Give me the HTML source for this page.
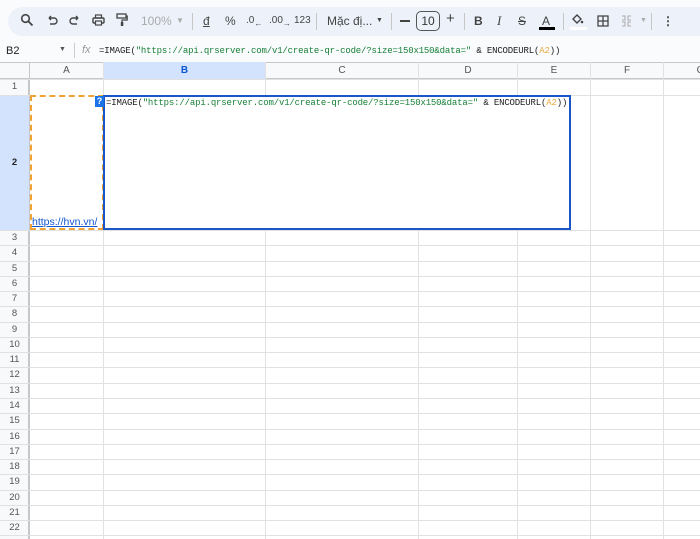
<!DOCTYPE html>
<html><head><meta charset="utf-8"><style>
*{box-sizing:border-box;margin:0;padding:0}
body{width:700px;height:539px;overflow:hidden;background:#f9fbfd;font-family:"Liberation Sans",sans-serif;position:relative;color:#444}
.a{position:absolute}
.tb{left:8px;top:7px;width:720px;height:29px;background:#edf2fa;border-radius:15px}
.ic{position:absolute;top:14px;font-size:12px;color:#444;line-height:14px}
.sep{position:absolute;top:13px;width:1px;height:17px;background:#c7c7c7}
.grid{left:0;top:62px;width:700px;height:477px;background:#fff}
.vl{position:absolute;width:1px;background:#e1e1e1}
.hl{position:absolute;height:1px;background:#e1e1e1;left:0;width:700px}
.ch{position:absolute;top:62px;height:17px;font-size:10px;color:#555;text-align:center;line-height:17px;background:#f8f9fa}
.rh{position:absolute;left:0;width:29px;font-size:9.5px;color:#555;text-align:center;background:#f8f9fa}
.mono{font-family:"Liberation Mono",monospace;font-size:9px;letter-spacing:-0.16px;color:#222}
</style></head><body>
<div class="a tb"></div>
<svg class="a" style="left:20px;top:13px" width="14" height="14" viewBox="0 0 14 14"><circle cx="5.5" cy="5.5" r="3.8" fill="none" stroke="#444" stroke-width="1.6"/><path d="M8.3 8.3L12.5 12.5" stroke="#444" stroke-width="1.8"/></svg>
<svg class="a" style="left:46px;top:14px" width="12" height="12" viewBox="0 0 12 12"><path d="M3 4h5a3 3 0 0 1 0 6H4M3 4l2-2M3 4l2 2" fill="none" stroke="#444" stroke-width="1.4"/></svg>
<svg class="a" style="left:69px;top:14px" width="12" height="12" viewBox="0 0 12 12"><path d="M9 4H4a3 3 0 0 0 0 6h4M9 4L7 2M9 4L7 6" fill="none" stroke="#444" stroke-width="1.4"/></svg>
<svg class="a" style="left:92px;top:14px" width="13" height="12" viewBox="0 0 13 12"><rect x="1" y="4" width="11" height="5" rx="1" fill="none" stroke="#444" stroke-width="1.4"/><rect x="3.5" y="1" width="6" height="3" fill="none" stroke="#444" stroke-width="1.2"/><rect x="3.5" y="7" width="6" height="4" fill="#edf2fa" stroke="#444" stroke-width="1.2"/></svg>
<svg class="a" style="left:116px;top:13px" width="12" height="14" viewBox="0 0 12 14"><rect x="1" y="1" width="9" height="4" fill="none" stroke="#444" stroke-width="1.3"/><path d="M10 3h1.2v4H6v2" fill="none" stroke="#444" stroke-width="1.2"/><rect x="4.8" y="9" width="2.5" height="4" fill="#444"/></svg>
<div class="ic" style="left:141px;color:#aaa">100%</div>
<div class="ic" style="left:176px;color:#aaa;font-size:8px">▼</div>
<div class="sep" style="left:192px"></div>
<div class="ic" style="left:203px;text-decoration:underline">đ</div>
<div class="ic" style="left:225px">%</div>
<div class="ic" style="left:246px;font-size:10px">.0<sub style="font-size:8px">←</sub></div>
<div class="ic" style="left:269px;font-size:10px">.00<sub style="font-size:8px">→</sub></div>
<div class="ic" style="left:294px;font-size:10px">123</div>
<div class="sep" style="left:316px"></div>
<div class="ic" style="left:327px">Mặc đị...</div>
<div class="ic" style="left:376px;font-size:7px">▼</div>
<div class="sep" style="left:391px"></div>
<div class="a" style="left:400px;top:20px;width:10px;height:1.5px;background:#444"></div>
<div class="a" style="left:416px;top:11px;width:24px;height:20px;border:1px solid #555;border-radius:5px;font-size:12px;text-align:center;line-height:18px;color:#333">10</div>
<div class="ic" style="left:446px;font-size:15px;top:12px">+</div>
<div class="sep" style="left:464px"></div>
<div class="ic" style="left:474px;font-weight:bold">B</div>
<div class="ic" style="left:497px;font-style:italic;font-family:'Liberation Serif',serif;font-size:13px">I</div>
<div class="ic" style="left:518px;text-decoration:line-through">S</div>
<div class="ic" style="left:542px">A</div>
<div class="a" style="left:539px;top:27px;width:16px;height:3px;background:#000"></div>
<div class="sep" style="left:563px"></div>
<svg class="a" style="left:570px;top:12px" width="14" height="14" viewBox="0 0 14 14"><path d="M3 7l4-4 4 4-4 4z" fill="none" stroke="#444" stroke-width="1.4"/><circle cx="12" cy="10" r="1.3" fill="#444"/></svg>
<div class="a" style="left:570px;top:27px;width:17px;height:3px;background:#fff"></div>
<svg class="a" style="left:597px;top:15px" width="12" height="12" viewBox="0 0 12 12"><path d="M1 1h10v10H1zM6 1v10M1 6h10" fill="none" stroke="#444" stroke-width="1.3"/></svg>
<svg class="a" style="left:621px;top:15px" width="11" height="12" viewBox="0 0 11 12"><path d="M1 1h3v4H1M10 1H7v4h3M1 7h3v4H1M10 7H7v4h3" fill="none" stroke="#aaa" stroke-width="1"/></svg>
<div class="ic" style="left:640px;color:#aaa;font-size:7px">▼</div>
<div class="sep" style="left:651px"></div>
<div class="ic" style="left:662px;font-weight:bold">⋮</div>

<div class="a" style="left:6px;top:45px;font-size:11px;color:#222">B2</div>
<div class="a" style="left:59px;top:46px;font-size:7px;color:#555">▼</div>
<div class="a" style="left:74px;top:43px;width:1px;height:15px;background:#ccc"></div>
<div class="a" style="left:82px;top:44px;font-size:11px;color:#999;font-style:italic">fx</div>
<div class="a mono" style="left:99px;top:46px">=IMAGE(<span style="color:#188038">"https://api.qrserver.com/v1/create-qr-code/?size=150x150&amp;data="</span> &amp; ENCODEURL(<span style="color:#e8a93c">A2</span>))</div>

<div class="a grid"></div>
<div class="a" style="left:0;top:62px;width:700px;height:17px;background:#f8f9fa;border-top:1px solid #c7c7c7;border-bottom:1px solid #c7c7c7"></div>
<div class="a" style="left:0;top:79px;width:29px;height:460px;background:#f8f9fa;border-right:1px solid #c7c7c7"></div>
<div class="a" style="left:104px;top:62px;width:161px;height:17px;background:#d3e3fd"></div>
<div class="a" style="left:0;top:95px;width:29px;height:135px;background:#d3e3fd"></div>
<div id="g"></div>
<script>
var g=document.getElementById('g'),h='';
var cols=[29,103,265,418,517,590,663];
var names=['A','B','C','D','E','F','G'];
for(var i=0;i<cols.length;i++){h+='<div class="vl" style="left:'+cols[i]+'px;top:62px;height:477px;'+(i==0?'background:#c7c7c7':'')+'"></div>';
var r=i+1<cols.length?cols[i+1]:737;h+='<div class="ch" style="left:'+(cols[i]+1)+'px;width:'+(r-cols[i]-1)+'px;background:transparent;'+(i==1?'color:#0b57d0;font-weight:bold':'')+'">'+names[i]+'</div>';}
var tops=[79,95,230];for(var k=1;k<=20;k++)tops.push(230+k*15.27);
for(var j=0;j<tops.length;j++){h+='<div class="hl" style="top:'+tops[j]+'px"></div>';}
for(var j=0;j<tops.length-1;j++){var t=tops[j],b=tops[j+1];h+='<div class="rh" style="top:'+t+'px;height:'+(b-t)+'px;line-height:'+(b-t)+'px;background:transparent;'+(j==1?'font-weight:bold;color:#222':'')+'">'+(j+1)+'</div>';}
g.innerHTML=h;
</script>
<div class="a" style="left:30px;top:95px;width:74px;height:135px;border:2px dashed #f0a234;background:#fff"></div>
<div class="a" style="left:32px;top:216px;font-size:10.5px;color:#1155cc;text-decoration:underline">https://hvn.vn/</div>
<div class="a" style="left:103px;top:95px;width:468px;height:135px;border:2px solid #1a56c8;background:#fff"></div>
<div class="a" style="left:95px;top:96px;width:9px;height:11px;background:#1a73e8;color:#fff;font-size:9px;font-weight:bold;text-align:center;line-height:11px">?</div>
<div class="a mono" style="left:106px;top:98px">=IMAGE(<span style="color:#188038">"https://api.qrserver.com/v1/create-qr-code/?size=150x150&amp;data="</span> &amp; ENCODEURL(<span style="color:#e8a93c">A2</span>))</div>
</body></html>
